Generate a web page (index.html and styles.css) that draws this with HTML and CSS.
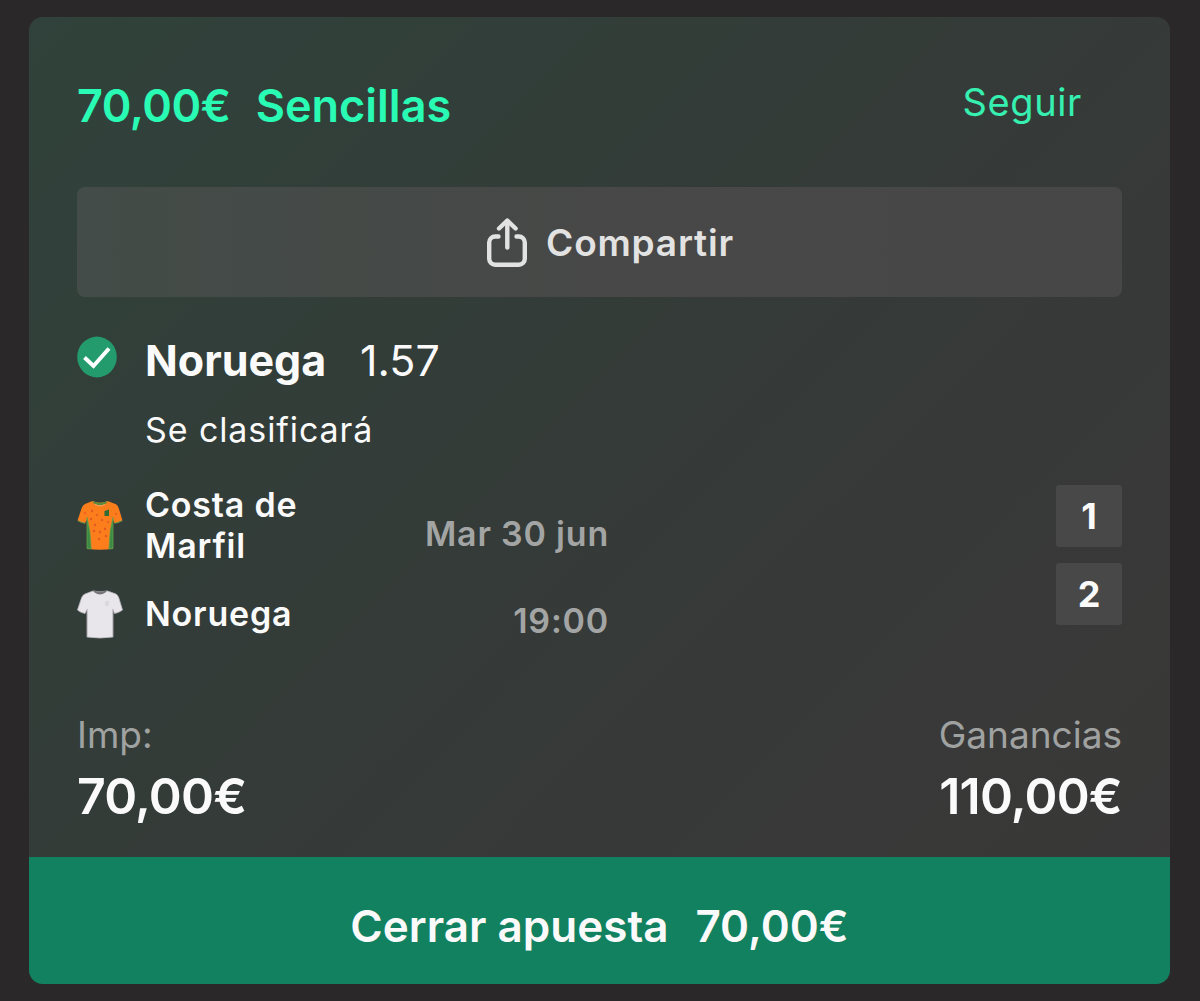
FILE: index.html
```html
<!DOCTYPE html>
<html lang="es">
<head>
<meta charset="utf-8">
<title>Apuesta</title>
<link rel="stylesheet" href="styles.css">
</head>
<body>
<article class="card">
  <div class="body">
    <header class="header">
      <h1 class="title"><span class="title-stake">70,00€</span><span class="title-type">Sencillas</span></h1>
      <a class="follow">Seguir</a>
    </header>

    <button class="share">
      <svg class="share-icon" viewBox="0 0 40 50" fill="none" stroke="currentColor" stroke-width="4.4" stroke-linecap="round" stroke-linejoin="round">
        <path d="M11.5 18.5H8.200a6 6 0 0 0-6 6v16.300a6 6 0 0 0 6 6h23.600a6 6 0 0 0 6-6v-16.300a6 6 0 0 0-6-6H29.500"/>
        <path d="M20.300 29.500V3"/>
        <path d="M12 10.500l8.300-8 8.300 8"/>
      </svg>
      <span class="share-label">Compartir</span>
    </button>

    <section class="pick">
      <svg class="check" viewBox="0 0 40 42">
        <ellipse cx="20" cy="21" rx="19.800" ry="20.400" fill="#239b6d"/>
        <path d="M7.500 21.500l9 8.500L32 12.500" fill="none" stroke="#fff" stroke-width="4"/>
      </svg>
      <span class="pick-name">Noruega</span>
      <span class="pick-odds">1.57</span>
    </section>
    <p class="market">Se clasificará</p>

    <section class="match">
      <div class="teams">
        <div class="team">
          <svg class="shirt" viewBox="0 0 46 50">
            <path d="M15.500 1Q23 4.500 30.500 1L39 4.200Q41 5.300 42 9L45.500 20.500Q41.500 23 37.500 23.300L36 19.500V48.500Q23 51 10 48.500V19.500L8 23.300Q4 23 .500 20.500L4.500 8.500Q5.500 5 8 4Z" fill="#fb7d1c"/>
            <path d="M10 17.500L12.800 31 14.200 49 10 48.500ZM36 17.500L33.200 31 32 49 36 48.500ZM1 20.700Q5 23 8.300 23.300M37.500 23.300Q41 23 45 20.700" fill="#3c8a43" stroke="#62a14a" stroke-width=".8"/>
            <path d="M15.500 1Q23 4.500 30.500 1L29 3.800Q23 7 17 3.800Z" fill="#5b8b3c"/>
            <path d="M18 4.200Q23 7.500 28 4.200" fill="none" stroke="#f2a05b" stroke-width="1.200"/>
            <path d="M27.500 11l4.500-1.500v6.500h-4.500z" fill="#2f6b35"/>
            <g fill="#e35a22"><circle cx="15" cy="11" r="1.200"/><circle cx="20" cy="15" r="1.100"/><circle cx="14" cy="19" r="1.200"/><circle cx="25" cy="20" r="1.200"/><circle cx="31" cy="22" r="1.100"/><circle cx="18" cy="25" r="1.200"/><circle cx="17" cy="31" r="1.300"/><circle cx="23" cy="32" r="1.300"/><circle cx="28" cy="29" r="1.200"/><circle cx="22" cy="39" r="1.200"/><circle cx="29" cy="36" r="1.200"/><circle cx="8" cy="13" r="1"/><circle cx="39" cy="14" r="1"/></g>
          </svg>
          <span class="team-name">Costa de<br>Marfil</span>
        </div>
        <div class="team">
          <svg class="shirt" viewBox="0 0 46 50">
            <path d="M16 2Q23 3.500 30.500 2L39 5Q41 6 42 9.500L45.500 21Q41.500 24 37.500 24.500L36 20.500V48Q23 50 10 48V20.500L8 24.500Q4 24 .500 21L4.500 9Q5.500 6 8 5Z" fill="#e8e5eb" stroke="#bcbabf" stroke-width=".8"/>
            <path d="M16 1.500Q23 3.500 30 1.500L28.500 3.500Q23 7.500 17.500 3.500Z" fill="#77757a"/>
            <path d="M10.500 20v28M35.500 20v28" stroke="#c6c3ca" stroke-width="1"/>
            <path d="M28 12.500l4-1v4l-2 2.500-2-2z" fill="#dad7dd"/>
          </svg>
          <span class="team-name">Noruega</span>
        </div>
      </div>
      <div class="schedule">
        <span>Mar 30 jun</span>
        <span class="time">19:00</span>
      </div>
      <div class="scores">
        <span class="score">1</span>
        <span class="score">2</span>
      </div>
    </section>

    <section class="totals">
      <div class="total">
        <span class="total-label total-label-stake">Imp:</span>
        <span class="total-value">70,00€</span>
      </div>
      <div class="total total-end">
        <span class="total-label">Ganancias</span>
        <span class="total-value">110,00€</span>
      </div>
    </section>
  </div>

  <button class="cashout"><span class="cashout-label">Cerrar apuesta</span><span class="cashout-value">70,00€</span></button>
</article>
</body>
</html>
```
FILE: styles.css
```css
* { box-sizing: border-box; }

body {
  margin: 0;
  height: 1001px;
  padding: 17px 30px 17px 29px;
  background: #2a2829;
  font-family: Inter, "Liberation Sans", sans-serif;
  color: #fafafa;
  overflow: hidden;
}

h1, p { margin: 0; }

button {
  border: 0;
  font-family: inherit;
  color: inherit;
}

.card {
  display: flex;
  flex-direction: column;
  height: 967px;
  border-radius: 14px;
  overflow: hidden;
  background: linear-gradient(135deg, #30423b 0%, #333c38 38%, #373938 65%, #3a3838 100%);
}

.body {
  flex: 1;
  padding: 0 48px;
}

.header {
  display: flex;
  justify-content: space-between;
  height: 170px;
  padding: 57px 40px 0 0;
}

.title {
  display: flex;
  gap: 25px;
  height: 64px;
  line-height: 64px;
  font-size: 45px;
  font-weight: 600;
  color: #29fab4;
}

.title-stake { letter-spacing: -0.5px; }

.follow {
  height: 56px;
  line-height: 56px;
  font-size: 38px;
  letter-spacing: 0.6px;
  color: #35f0b0;
}

.share {
  display: flex;
  align-items: center;
  justify-content: center;
  gap: 19px;
  width: 100%;
  height: 110px;
  padding: 2px 0 0 22px;
  border-radius: 8px;
  background: linear-gradient(90deg, #434c48, #474847 50%, #464746);
  color: #e2e2e2;
}

.share-icon { width: 40px; height: 50px; }

.share-label {
  font-size: 37px;
  font-weight: 600;
  line-height: 48px;
  letter-spacing: 0.8px;
}

.pick {
  display: flex;
  height: 48px;
  margin-top: 39px;
  line-height: 48px;
  font-size: 43px;
}

.check {
  width: 40px;
  height: 42px;
  margin-right: 28px;
}

.pick-name {
  width: 215px;
  font-weight: 700;
}

.market {
  margin-top: 25px;
  padding-left: 68px;
  font-size: 34px;
  line-height: 41px;
  letter-spacing: 0.9px;
}

.match {
  display: grid;
  grid-template-columns: 280px 252px 1fr;
  margin-top: 34px;
  font-size: 34px;
  font-weight: 600;
  line-height: 41px;
}

.teams {
  display: grid;
  grid-template-rows: 82px 41px;
  gap: 27px;
}

.team {
  display: flex;
  align-items: center;
  gap: 22px;
  letter-spacing: 0.8px;
}

.shirt {
  flex: none;
  width: 46px;
  height: 50px;
}

.schedule {
  display: flex;
  flex-direction: column;
  align-items: flex-end;
  gap: 46px;
  padding-top: 29px;
  letter-spacing: 0.8px;
  white-space: nowrap;
  color: #a3a5a4;
}

.scores {
  display: flex;
  flex-direction: column;
  align-items: flex-end;
  gap: 16px;
  padding-top: 1px;
}

.score {
  width: 66px;
  height: 62px;
  border-radius: 3px;
  background: #484848;
  font-size: 36px;
  font-weight: 700;
  line-height: 62px;
  text-align: center;
}

.totals {
  display: flex;
  justify-content: space-between;
  margin-top: 70px;
}

.total {
  display: flex;
  flex-direction: column;
}

.total-end { align-items: flex-end; }

.total-label {
  font-size: 37px;
  line-height: 48px;
  color: #a0a2a1;
}

.total-value {
  margin-top: 7px;
  font-size: 50px;
  font-weight: 600;
  line-height: 60px;
  letter-spacing: -0.8px;
}

.cashout {
  display: flex;
  flex: none;
  justify-content: center;
  gap: 27px;
  height: 127px;
  padding: 39px 0 0;
  background: #128160;
  font-size: 44px;
  font-weight: 600;
  line-height: 60px;
}
```
